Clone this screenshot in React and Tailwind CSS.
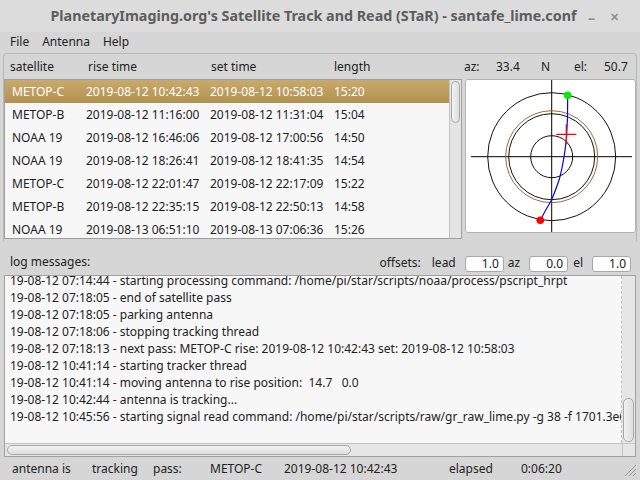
import React from "react";

const passes = [
  ["METOP-C", "2019-08-12 10:42:43", "2019-08-12 10:58:03", "15:20"],
  ["METOP-B", "2019-08-12 11:16:00", "2019-08-12 11:31:04", "15:04"],
  ["NOAA 19", "2019-08-12 16:46:06", "2019-08-12 17:00:56", "14:50"],
  ["NOAA 19", "2019-08-12 18:26:41", "2019-08-12 18:41:35", "14:54"],
  ["METOP-C", "2019-08-12 22:01:47", "2019-08-12 22:17:09", "15:22"],
  ["METOP-B", "2019-08-12 22:35:15", "2019-08-12 22:50:13", "14:58"],
  ["NOAA 19", "2019-08-13 06:51:10", "2019-08-13 07:06:36", "15:26"],
];

const logLines = [
  "19-08-12 07:14:44 - starting processing command: /home/pi/star/scripts/noaa/process/pscript_hrpt",
  "19-08-12 07:18:05 - end of satellite pass",
  "19-08-12 07:18:05 - parking antenna",
  "19-08-12 07:18:06 - stopping tracking thread",
  "19-08-12 07:18:13 - next pass: METOP-C rise: 2019-08-12 10:42:43 set: 2019-08-12 10:58:03",
  "19-08-12 10:41:14 - starting tracker thread",
  "19-08-12 10:41:14 - moving antenna to rise position:  14.7   0.0",
  "19-08-12 10:42:44 - antenna is tracking...",
  "19-08-12 10:45:56 - starting signal read command: /home/pi/star/scripts/raw/gr_raw_lime.py -g 38 -f 1701.3e6",
];

function PolarPlot() {
  return (
    <svg width="171" height="154" viewBox="0 0 171 154">
      <line x1="5" y1="76.7" x2="166" y2="76.7" stroke="#000" strokeWidth="1" />
      <line x1="85.7" y1="0" x2="85.7" y2="154" stroke="#000" strokeWidth="1" />
      <circle cx="85.7" cy="76.7" r="64" fill="none" stroke="#111" strokeWidth="1" />
      <circle cx="85.7" cy="76.7" r="46" fill="none" stroke="#9a6a3a" strokeWidth="1" />
      <circle cx="85.7" cy="76.7" r="43" fill="none" stroke="#111" strokeWidth="1" />
      <circle cx="85.7" cy="76.7" r="21" fill="none" stroke="#111" strokeWidth="1" />
      <path
        d="M101.7 15.3 L101.5 37.7 L100.5 58 Q98 82 93.3 99.3 Q89 112 85 121 Q79 131 74.3 140.3"
        fill="none"
        stroke="#0000ff"
        strokeWidth="1.2"
      />
      <line x1="90.3" y1="54.3" x2="110.3" y2="54.3" stroke="#ff0000" strokeWidth="1.3" />
      <line x1="100.3" y1="44.3" x2="100.3" y2="64.3" stroke="#ff0000" strokeWidth="1.3" />
      <circle cx="101.7" cy="15.3" r="3.8" fill="#00ee00" />
      <circle cx="74.3" cy="140.3" r="3.8" fill="#ff0000" />
    </svg>
  );
}

function Field({ value }) {
  return (
    <div className="w-[39px] h-[16px] bg-white border border-[#a8a8a8] rounded-[3px] text-right pr-[4px] leading-[14px]">
      {value}
    </div>
  );
}

export default function App() {
  return (
    <div
      className="w-[640px] h-[480px] bg-[#d6d6d6] flex flex-col text-[12px] text-[#222] overflow-hidden"
      style={{ fontFamily: '"Noto Sans", "Open Sans", sans-serif' }}
    >
      {/* title bar */}
      <div className="h-[32px] shrink-0 bg-[#dcdcdc] flex items-center relative">
        <div className="flex-1 text-center font-bold text-[14.3px] text-[#5c5c5c] pr-[13px]">
          PlanetaryImaging.org's Satellite Track and Read (STaR) - santafe_lime.conf
        </div>
        <div className="absolute right-[21px] top-[7px] text-[#909090] font-bold flex items-center gap-[15px]">
          <span className="text-[14px]">–</span>
          <span className="text-[11px]">✕</span>
        </div>
      </div>

      {/* menu */}
      <div className="h-[20px] shrink-0 flex items-center gap-[13px] pl-[10px] text-[12px]">
        <span>File</span>
        <span>Antenna</span>
        <span>Help</span>
      </div>

      {/* top section */}
      <div className="mt-[1px] mx-[3px] h-[188px] shrink-0 border-t border-l border-r border-[#b8b8b8] rounded-t-[4px] flex flex-col">
        <div className="h-[25px] flex items-center">
          <span className="ml-[6px] w-[78px]">satellite</span>
          <span className="w-[123px]">rise time</span>
          <span className="w-[123px]">set time</span>
          <span className="w-[130px]">length</span>
          <span className="w-[32px]">az:</span>
          <span className="w-[45px]">33.4</span>
          <span className="w-[33px]">N</span>
          <span className="w-[30px]">el:</span>
          <span>50.7</span>
        </div>
        <div className="flex gap-[3px]">
          <div className="w-[458px] h-[160px] border border-[#a0a0a0] bg-[#f7f7f7] flex overflow-hidden">
            <div className="flex-1 flex flex-col">
              {passes.map((p, i) => (
                <div
                  key={i}
                  className={
                    "h-[23px] shrink-0 flex items-center " +
                    (i === 0
                      ? "bg-gradient-to-b from-[#c8aa6c] to-[#b39150] text-white"
                      : "")
                  }
                >
                  <span className="ml-[7px] w-[74px]">{p[0]}</span>
                  <span className="w-[124px]">{p[1]}</span>
                  <span className="w-[124px]">{p[2]}</span>
                  <span>{p[3]}</span>
                </div>
              ))}
            </div>
            <div className="w-[12px] border-l border-[#c4c4c4] bg-[#e4e4e4] pt-[1px]">
              <div className="h-[42px] mx-[1px] rounded-[5px] border border-[#a8a8a8] bg-gradient-to-r from-[#f2f2f2] to-[#dedede]" />
            </div>
          </div>
          <div className="w-[171px] h-[154px] bg-white border border-[#b4b4b4] rounded-[3px] overflow-hidden">
            <PolarPlot />
          </div>
        </div>
      </div>

      {/* offsets row */}
      <div className="h-[34px] shrink-0 flex items-end pb-[3px] pl-[10px] pr-[9px]">
        <span className="flex-1 mb-[1px]">log messages:</span>
        <span className="mr-[11px]">offsets:</span>
        <span className="mr-[9px]">lead</span>
        <Field value="1.0" />
        <span className="ml-[4px] mr-[9px]">az</span>
        <Field value="0.0" />
        <span className="ml-[5px] mr-[9px]">el</span>
        <Field value="1.0" />
      </div>

      {/* log */}
      <div className="mx-[4px] h-[182px] shrink-0 border border-[#a0a0a0] bg-[#f7f7f7] flex flex-col overflow-hidden">
        <div className="flex flex-1 overflow-hidden">
          <div className="flex-1 overflow-hidden border-r border-dashed border-[#c0c0c0]">
            <div className="mt-[-4px] pl-[5px] whitespace-pre leading-[17px]">
              {logLines.map((l, i) => (
                <div key={i}>{l}</div>
              ))}
            </div>
          </div>
          <div className="w-[13px] bg-[#e6e6e6] flex flex-col justify-end pb-[1px]">
            <div className="h-[44px] mx-[1px] rounded-[5px] border border-[#a8a8a8] bg-gradient-to-r from-[#f2f2f2] to-[#dedede]" />
          </div>
        </div>
        <div className="h-[13px] flex border-t border-[#c4c4c4] bg-[#e6e6e6]">
          <div className="flex-1 pl-[2px] py-[1px]">
            <div className="w-[344px] h-full rounded-[5px] border border-[#a8a8a8] bg-gradient-to-b from-[#f2f2f2] to-[#dedede]" />
          </div>
          <div className="w-[13px] bg-[#e6e6e6] border-l border-[#c4c4c4]" />
        </div>
      </div>

      {/* status bar */}
      <div className="flex-1 flex items-center relative">
        <span className="ml-[12px] w-[80px]">antenna is</span>
        <span className="w-[61px]">tracking</span>
        <span className="w-[57px]">pass:</span>
        <span className="w-[74px]">METOP-C</span>
        <span className="w-[165px]">2019-08-12 10:42:43</span>
        <span className="w-[72px]">elapsed</span>
        <span>0:06:20</span>
        <svg className="absolute right-[3px] bottom-[3px]" width="14" height="14" viewBox="0 0 14 14">
          <line x1="13" y1="2" x2="2" y2="13" stroke="#9a9a9a" strokeWidth="1" />
          <line x1="13" y1="6" x2="6" y2="13" stroke="#9a9a9a" strokeWidth="1" />
          <line x1="13" y1="10" x2="10" y2="13" stroke="#9a9a9a" strokeWidth="1" />
        </svg>
      </div>
    </div>
  );
}
